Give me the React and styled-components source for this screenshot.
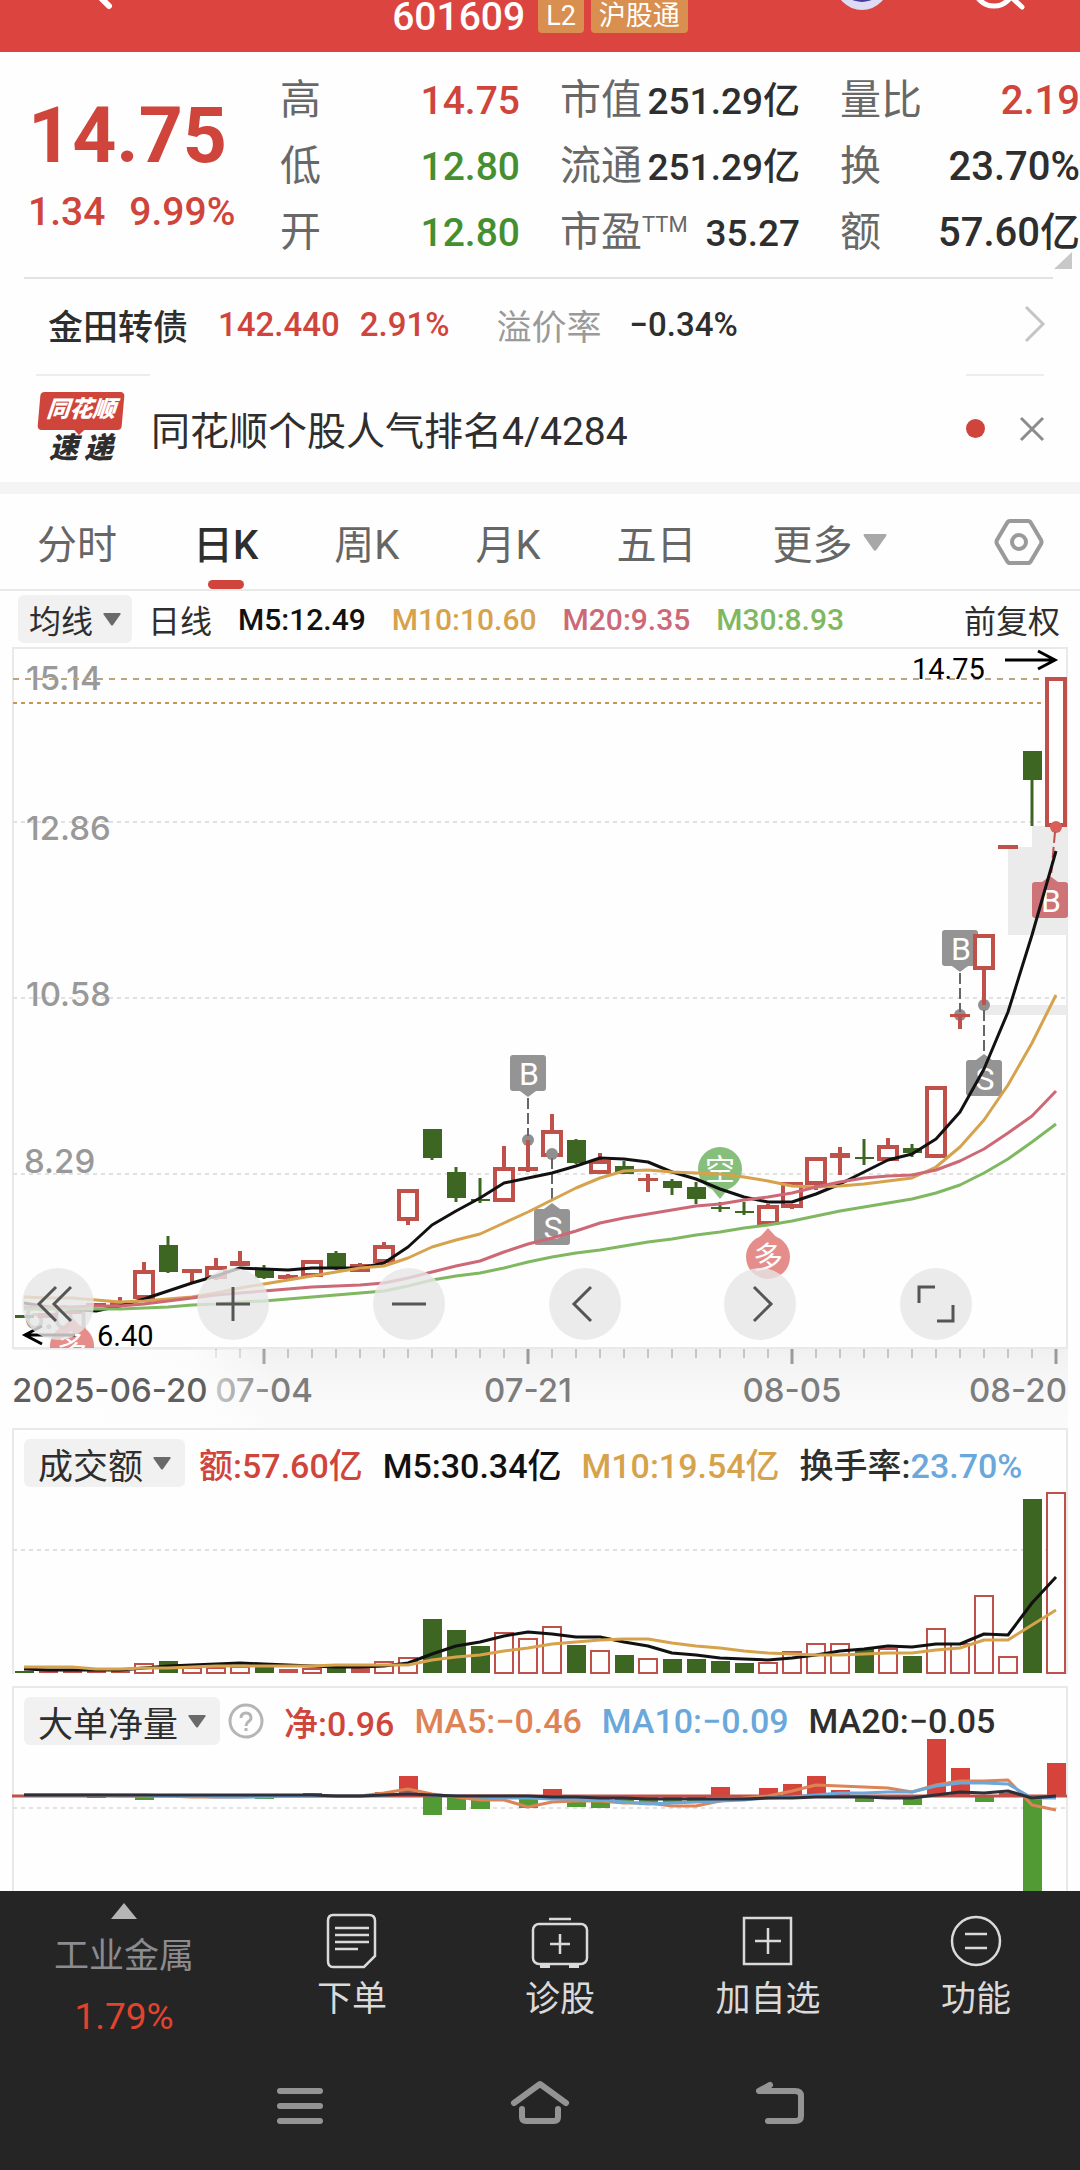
import React from 'react';
import styled, { createGlobalStyle, css } from 'styled-components';

const colors = {
    header: '#dc4440',
    badge: '#d88f50',
    red: '#cf453c',
    redLine: '#c0504a',
    green: '#468f30',
    candleGreen: '#3d6622',
    barGreen: '#529a33',
    barRed: '#d5433a',
    text: '#2e2e2e',
    black: '#111111',
    label: '#686868',
    muted: '#9a9a9a',
    line: '#e9e9e9',
    yellow: '#d6a24c',
    pink: '#cd6877',
    lime: '#80b862',
    blue: '#6aa8dc',
    orange: '#dd8355',
    dark: '#252525'
};

const textFont = `Roboto, 'Noto Sans CJK SC', sans-serif`;
const dateFont = `Inter, Roboto, sans-serif`;

const GlobalStyle = createGlobalStyle`
    * {
        box-sizing: border-box;
    }

    body {
        margin: 0;
        background: #fefefe;
        color: ${colors.text};
        font-family: ${textFont};
    }

    button {
        border: 0;
        padding: 0;
        background: none;
        color: inherit;
        font: inherit;
        cursor: pointer;
    }

    svg {
        display: block;
        flex: none;
    }
`;

const Page = styled.main`
    display: flex;
    flex-direction: column;
    min-height: 100vh;
    overflow: hidden;
`;

/* ---------- header ---------- */

const Header = styled.header`
    display: grid;
    grid-template-rows: 33px;
    grid-template-columns: 1fr auto 1fr;
    align-items: end;
    height: 52px;
    background: ${colors.header};
    color: #fff;
`;

const HeaderSide = styled.div`
    display: flex;
    justify-content: ${({ $end }) => ($end ? 'flex-end' : 'flex-start')};
    gap: 80px;
    padding: ${({ $end }) => ($end ? '0 48px 0 0' : '0 0 0 66px')};
`;

const StockCode = styled.h1`
    display: flex;
    gap: 7px;
    height: 40px;
    margin: 0;
    font-size: 39px;
    font-weight: 500;
    line-height: 48px;
`;

const Badge = styled.span`
    height: 40px;
    margin-left: ${({ $first }) => ($first ? 6 : 0)}px;
    padding: 0 8px;
    border-radius: 4px;
    background: ${colors.badge};
    font-size: 27px;
    font-weight: 400;
    line-height: 46px;
`;

/* ---------- quote ---------- */

const Quote = styled.section`
    position: relative;
    display: grid;
    grid-template-columns: repeat(4, 1fr);
    column-gap: 40px;
    padding: 15px 0 12px;
`;

const PriceBox = styled.div`
    padding: 31px 0 0 28px;
    color: ${colors.red};
`;

const Price = styled.div`
    font-size: 77px;
    font-weight: 700;
    line-height: 76px;
`;

const Change = styled.div`
    display: flex;
    gap: 24px;
    font-size: 39px;
    font-weight: 500;
    line-height: 76px;
`;

const QuoteList = styled.dl`
    margin: 0;
    font-size: ${({ $size }) => $size}px;
`;

const QuoteRow = styled.div`
    display: flex;
    align-items: baseline;
    justify-content: space-between;
    height: 66px;
    line-height: 66px;
    white-space: nowrap;

    dt {
        color: ${colors.label};
        font-size: 41px;
    }

    dd {
        margin: 0;
        color: ${({ $tone }) => colors[$tone] || colors.text};
        font-weight: 500;
    }

    sup {
        font-size: 22px;
        line-height: 22px;
        vertical-align: 14px;
    }
`;

const Corner = styled.svg`
    position: absolute;
    right: 8px;
    bottom: 8px;
`;

const Rule = styled.hr`
    width: calc(100% - 51px);
    height: 2px;
    margin: 0 27px 0 24px;
    border: 0;
    background: #e3e3e3;
`;

/* ---------- bond and news rows ---------- */

const BondRow = styled.a`
    display: flex;
    align-items: center;
    height: 95px;
    padding: 0 34px 5px 48px;
    color: inherit;
    font-weight: 500;
    text-decoration: none;
`;

const BondText = styled.span`
    margin-right: ${({ $gap }) => $gap}px;
    color: ${({ $tone }) => colors[$tone] || colors.text};
    font-size: ${({ $number }) => ($number ? 33 : 35)}px;
    font-weight: ${({ $tone }) => ($tone === 'muted' ? 400 : 500)};
`;

const Push = styled.span`
    flex: 1;
`;

const ShortRules = styled.div`
    display: flex;
    justify-content: space-between;
    padding: 0 36px;

    &::before,
    &::after {
        content: '';
        width: 114px;
        height: 2px;
        background: #ededed;
    }

    &::after {
        width: 78px;
    }
`;

const NewsRow = styled.section`
    display: flex;
    align-items: center;
    height: 106px;
    padding: 0 35px 1px 37px;
`;

const Logo = styled.div`
    display: flex;
    flex-direction: column;
    align-items: center;
    width: 88px;
    margin-right: 26px;
    font-weight: 900;
    font-style: italic;
`;

const LogoTop = styled.span`
    position: relative;
    width: 84px;
    height: 38px;
    border-radius: 4px;
    background: ${colors.red};
    color: #fff;
    font-size: 23px;
    line-height: 35px;
    text-align: center;
    transform: skewX(-5deg);

    &::after {
        content: '';
        position: absolute;
        left: 36px;
        top: 37px;
        border: 6px solid transparent;
        border-top-color: ${colors.red};
    }
`;

const LogoBottom = styled.span`
    display: flex;
    gap: 6px;
    color: ${colors.text};
    font-size: 29px;
    line-height: 36px;
`;

const NewsTitle = styled.a`
    padding-bottom: 2px;
    color: ${colors.text};
    font-size: 39px;
    text-decoration: none;
`;

const Dot = styled.span`
    width: 19px;
    height: 19px;
    margin: 0 34px 0 auto;
    border-radius: 50%;
    background: ${colors.red};
`;

const Band = styled.div`
    height: 12px;
    background: #f4f4f4;
`;

/* ---------- tabs ---------- */

const Tabs = styled.nav`
    display: flex;
    gap: 76px;
    height: 97px;
    padding: 0 36px 0 37px;
    border-bottom: 2px solid ${colors.line};

    > :last-child {
        margin-left: auto;
    }
`;

const Tab = styled.button`
    position: relative;
    display: flex;
    align-items: center;
    gap: 10px;
    color: ${({ $active }) => ($active ? colors.text : '#666')};
    font-size: 40px;
    font-weight: ${({ $active }) => ($active ? 500 : 400)};

    ${({ $active }) =>
        $active &&
        css`
            &::after {
                content: '';
                position: absolute;
                left: calc(50% - 18px);
                bottom: 0;
                width: 36px;
                height: 9px;
                border-radius: 5px;
                background: ${colors.red};
            }
        `}
`;

/* ---------- indicator rows ---------- */

const Legend = styled.div`
    display: flex;
    align-items: center;
    gap: 26px;
    height: 56px;
    padding: 0 20px 0 18px;
    font-size: 30px;
    font-weight: 500;
    white-space: nowrap;
`;

const LegendGroup = styled.div`
    display: flex;
    align-items: center;
    gap: ${({ $gap }) => $gap}px;
`;

const Picker = styled.button`
    display: flex;
    align-items: center;
    gap: 10px;
    height: 48px;
    padding: 0 ${({ $wide }) => ($wide ? 14 : 11)}px;
    border-radius: 6px;
    background: #f1f1f1;
    font-size: ${({ $wide }) => ($wide ? 35 : 32)}px;
    font-weight: 400;
`;

const Value = styled.span`
    color: ${({ $tone }) => colors[$tone] || colors.text};
    font-size: ${({ $size }) => $size || 30}px;
    font-weight: ${({ $light }) => ($light ? 400 : 500)};
    margin-left: ${({ $end }) => ($end ? 'auto' : 0)};
`;

/* ---------- charts ---------- */

const Figure = styled.figure`
    position: relative;
    margin: 0;
`;

const Chart = styled.svg`
    width: 100%;
    height: auto;
    overflow: hidden;
`;

const ChartTools = styled.div`
    position: absolute;
    left: 2%;
    right: 10%;
    bottom: 88px;
    display: flex;
    justify-content: space-between;
`;

const ToolButton = styled.button`
    display: flex;
    align-items: center;
    justify-content: center;
    width: 72px;
    height: 72px;
    border-radius: 50%;
    background: rgba(230, 230, 230, 0.8);
`;

const Panel = styled.section`
    display: grid;

    > * {
        grid-area: 1 / 1;
    }
`;

const PanelLegend = styled(Legend)`
    align-self: start;
    gap: 20px;
    height: 50px;
    margin-top: 10px;
    padding: 0 24px;
`;

/* ---------- bottom bars ---------- */

const BottomBar = styled.footer`
    flex: 1;
    background: ${colors.dark};
    color: #dadada;
`;

const Actions = styled.nav`
    display: grid;
    grid-template-columns: 31fr 26fr 26fr 26fr 26fr;
    height: 162px;
`;

const Action = styled.button`
    display: flex;
    flex-direction: column;
    align-items: center;
    gap: 4px;
    padding-top: 20px;
    font-size: 35px;
    line-height: 50px;
`;

const Sector = styled.a`
    display: flex;
    flex-direction: column;
    align-items: center;
    padding-top: 11px;
    color: #8b8b90;
    font-size: 35px;
    line-height: 60px;
    text-decoration: none;

    svg {
        margin-bottom: 7px;
    }

    strong {
        color: #e2432d;
        font-size: 37px;
        font-weight: 400;
    }
`;

const SystemNav = styled.nav`
    display: flex;
    justify-content: center;
    gap: 180px;
    padding-top: 23px;
`;

const SystemButton = styled.button`
    width: 60px;
    height: 60px;
`;

/* ---------- data ---------- */

const quote = [
    {
        size: 39,
        rows: [
            { label: '高', value: '14.75', tone: 'red' },
            { label: '低', value: '12.80', tone: 'green' },
            { label: '开', value: '12.80', tone: 'green' }
        ]
    },
    {
        size: 37,
        rows: [
            { label: '市值', value: '251.29亿' },
            { label: '流通', value: '251.29亿' },
            { label: '市盈', sup: 'TTM', value: '35.27' }
        ]
    },
    {
        size: 40,
        rows: [
            { label: '量比', value: '2.19', tone: 'red' },
            { label: '换', value: '23.70%' },
            { label: '额', value: '57.60亿' }
        ]
    }
];

const tabs = ['分时', '日K', '周K', '月K', '五日'];

// The three charts share one coordinate space: a day every 24 units,
// y running on from the price chart to the last panel.
const dayX = i => 24 + i * 24;

// [kind, high, body top, body bottom, low]; u = hollow, r = solid red, g = green
const candles = [
    ['g', 1315, 1315, 1318, 1318],
    ['r', 1313, 1313, 1318, 1318],
    ['r', 1310, 1311, 1314, 1314],
    ['r', 1303, 1303, 1307, 1307],
    ['r', 1297, 1302, 1305, 1305],
    ['u', 1262, 1272, 1297, 1297],
    ['g', 1236, 1245, 1272, 1273],
    ['r', 1269, 1269, 1273, 1282],
    ['u', 1258, 1268, 1277, 1280],
    ['r', 1251, 1261, 1266, 1266],
    ['g', 1265, 1268, 1278, 1279],
    ['r', 1274, 1275, 1279, 1279],
    ['u', 1261, 1262, 1275, 1275],
    ['g', 1251, 1253, 1267, 1270],
    ['r', 1263, 1264, 1272, 1272],
    ['u', 1242, 1247, 1261, 1261],
    ['u', 1191, 1191, 1219, 1225],
    ['g', 1129, 1129, 1158, 1160],
    ['g', 1167, 1172, 1198, 1202],
    ['g', 1178, 1199, 1201, 1203],
    ['u', 1146, 1169, 1200, 1200],
    ['r', 1140, 1167, 1171, 1172],
    ['u', 1114, 1132, 1155, 1155],
    ['g', 1139, 1140, 1163, 1164],
    ['u', 1153, 1162, 1172, 1174],
    ['g', 1161, 1166, 1174, 1174],
    ['r', 1174, 1178, 1181, 1192],
    ['g', 1179, 1181, 1188, 1195],
    ['g', 1182, 1187, 1199, 1204],
    ['g', 1202, 1207, 1209, 1212],
    ['g', 1202, 1211, 1213, 1215],
    ['u', 1204, 1207, 1223, 1224],
    ['u', 1184, 1184, 1206, 1209],
    ['u', 1159, 1159, 1183, 1190],
    ['r', 1147, 1153, 1158, 1175],
    ['g', 1139, 1157, 1159, 1165],
    ['u', 1138, 1147, 1159, 1159],
    ['g', 1144, 1148, 1153, 1157],
    ['u', 1087, 1088, 1156, 1156],
    ['r', 1014, 1014, 1017, 1029],
    ['u', 935, 936, 968, 1005],
    ['r', 845, 845, 849, 849],
    ['g', 751, 751, 780, 826],
    ['u', 678, 679, 825, 825]
];

const ma5 = [
    1303, 1307, 1309, 1311, 1306, 1299, 1291, 1283, 1276, 1268, 1269, 1270, 1268, 1268, 1268, 1263,
    1247, 1225, 1211, 1198, 1183, 1178, 1173, 1166, 1158, 1159, 1162, 1172, 1179, 1189, 1197, 1202,
    1202, 1194, 1184, 1172, 1160, 1154, 1139, 1112, 1069, 1012, 935, 851
];
const ma10 = [
    1297, 1298, 1298, 1300, 1302, 1301, 1299, 1297, 1293, 1288, 1284, 1280, 1276, 1272, 1268, 1266,
    1258, 1247, 1240, 1234, 1223, 1212, 1200, 1188, 1178, 1171, 1170, 1172, 1173, 1174, 1177, 1181,
    1186, 1187, 1186, 1184, 1181, 1178, 1167, 1147, 1120, 1085, 1043, 995
];
const ma20 = [
    1307, 1307, 1307, 1306, 1306, 1304, 1301, 1298, 1295, 1293, 1291, 1289, 1287, 1286, 1285, 1283,
    1278, 1272, 1266, 1261, 1252, 1244, 1238, 1231, 1223, 1218, 1214, 1210, 1206, 1204, 1200, 1197,
    1193, 1187, 1182, 1178, 1176, 1175, 1170, 1161, 1149, 1133, 1116, 1091
];
const ma30 = [
    1309, 1309, 1309, 1309, 1309, 1308, 1307, 1305, 1304, 1302, 1301, 1299, 1297, 1295, 1293, 1291,
    1286, 1280, 1276, 1273, 1268, 1262, 1257, 1253, 1250, 1246, 1242, 1239, 1235, 1232, 1228, 1225,
    1221, 1216, 1211, 1207, 1203, 1199, 1193, 1185, 1173, 1159, 1142, 1124
];

const VOLUME_BASE = 1673;
const volumes = [
    ['g', 1671], ['r', 1671], ['r', 1671], ['r', 1671], ['r', 1671], ['u', 1663], ['g', 1661],
    ['u', 1667], ['u', 1667], ['u', 1666], ['g', 1667], ['r', 1669], ['u', 1668], ['g', 1668],
    ['r', 1668], ['u', 1661], ['u', 1657], ['g', 1619], ['g', 1630], ['g', 1646], ['u', 1632],
    ['u', 1638], ['u', 1626], ['g', 1645], ['u', 1650], ['g', 1655], ['u', 1658], ['g', 1659],
    ['g', 1659], ['g', 1661], ['g', 1663], ['u', 1662], ['u', 1651], ['u', 1643], ['u', 1643],
    ['g', 1649], ['u', 1648], ['g', 1656], ['u', 1628], ['u', 1643], ['u', 1595], ['u', 1656],
    ['g', 1499], ['u', 1492]
];
const volumeMa5 = [
    1669, 1670, 1670, 1670, 1670, 1668, 1666, 1665, 1664, 1663, 1664, 1665, 1666, 1667, 1667, 1666,
    1663, 1654, 1646, 1642, 1636, 1632, 1634, 1637, 1637, 1642, 1646, 1653, 1655, 1658, 1659, 1660,
    1658, 1655, 1651, 1649, 1646, 1647, 1644, 1644, 1634, 1635, 1603, 1577
];
const volumeMa10 = [
    1667, 1667, 1667, 1669, 1669, 1668, 1668, 1667, 1666, 1666, 1666, 1666, 1666, 1665, 1665, 1665,
    1665, 1660, 1657, 1655, 1651, 1648, 1644, 1642, 1640, 1639, 1639, 1643, 1646, 1648, 1651, 1653,
    1654, 1655, 1655, 1654, 1653, 1653, 1650, 1648, 1640, 1640, 1625, 1610
];

const FLOW_BASE = 1796;
const flows = {
    3: 1798, 5: 1800, 10: 1799, 12: 1793, 15: 1792, 16: 1776, 17: 1815, 18: 1810, 19: 1809,
    21: 1808, 22: 1789, 23: 1807, 24: 1808, 25: 1803, 26: 1805, 27: 1802, 28: 1802, 29: 1787,
    31: 1788, 32: 1784, 33: 1776, 34: 1790, 35: 1802, 37: 1805, 38: 1739, 39: 1768, 40: 1802,
    41: 1793, 42: 1900, 43: 1763
};
const flowMa5 = [
    1795, 1795, 1795, 1795, 1796, 1796, 1796, 1797, 1797, 1797, 1796, 1796, 1796, 1796, 1796, 1793,
    1789, 1794, 1797, 1800, 1800, 1807, 1802, 1801, 1801, 1803, 1803, 1806, 1806, 1801, 1798, 1796,
    1791, 1785, 1786, 1787, 1788, 1792, 1785, 1781, 1781, 1780, 1805, 1810
];
const flowMa10 = [
    1795, 1795, 1795, 1795, 1795, 1795, 1796, 1796, 1797, 1797, 1797, 1796, 1796, 1796, 1796, 1795,
    1794, 1795, 1796, 1797, 1798, 1798, 1799, 1799, 1800, 1802, 1804, 1803, 1802, 1801, 1800, 1798,
    1797, 1795, 1793, 1793, 1792, 1792, 1786, 1783, 1783, 1784, 1798, 1798
];
const flowMa20 = [
    1795, 1795, 1795, 1795, 1795, 1795, 1795, 1795, 1795, 1795, 1795, 1795, 1795, 1796, 1796, 1795,
    1794, 1795, 1796, 1796, 1796, 1796, 1797, 1797, 1798, 1798, 1799, 1799, 1799, 1799, 1799, 1798,
    1798, 1797, 1797, 1797, 1798, 1798, 1795, 1792, 1793, 1791, 1798, 1796
];

/* ---------- chart parts ---------- */

const Line = ({ data, color, width = 3 }) => (
    <polyline
        points={data.map((y, i) => `${dayX(i)},${y}`).join(' ')}
        fill="none"
        stroke={color}
        strokeWidth={width}
        strokeLinejoin="round"
    />
);

const Candle = ({ i, data: [kind, high, top, bottom, low] }) => {
    const x = dayX(i);
    const color = kind === 'g' ? colors.candleGreen : colors.redLine;
    return (
        <g stroke={color} strokeWidth={kind === 'g' ? 3 : 4}>
            {high < top && <path d={`M${x} ${high}V${top}`} />}
            {low > bottom && <path d={`M${x} ${bottom}V${low}`} />}
            {kind === 'u' ? (
                <rect x={x - 9} y={top} width="18" height={bottom - top} fill="#fefefe" />
            ) : (
                <rect
                    x={kind === 'g' ? x - 9 : x - 10}
                    y={top}
                    width={kind === 'g' ? 19 : 20}
                    height={bottom - top}
                    fill={color}
                    stroke="none"
                />
            )}
        </g>
    );
};

const Tag = ({ x, y, letter, up, color = '#949494' }) => (
    <g>
        <rect x={x - 18} y={y} width="36" height="36" rx="3" fill={color} />
        <path
            d={up ? `M${x - 8} ${y}L${x} ${y - 6}L${x + 8} ${y}Z` : `M${x - 8} ${y + 36}L${x} ${y + 42}L${x + 8} ${y + 36}Z`}
            fill={color}
        />
        <text x={x + 1} y={y + 30} fontSize="32" fill="#fff" textAnchor="middle">
            {letter}
        </text>
    </g>
);

const Leader = ({ d, color = '#666' }) => (
    <path d={d} fill="none" stroke={color} strokeWidth="2" strokeDasharray="11 4" />
);

const Balloon = ({ x, y, letter, up, color }) => (
    <g opacity="0.85">
        <circle cx={x} cy={y} r="22" fill={color} />
        <path
            d={up ? `M${x - 9} ${y - 19}L${x} ${y - 29}L${x + 9} ${y - 19}Z` : `M${x - 9} ${y + 19}L${x} ${y + 30}L${x + 9} ${y + 19}Z`}
            fill={color}
        />
        <text x={x} y={y + 11} fontSize="30" fill="#fff" textAnchor="middle">
            {letter}
        </text>
    </g>
);

const Grid = ({ y, color = '#e2e2e2', dash = '4 4' }) => (
    <path d={`M13 ${y}H1066`} stroke={color} strokeWidth="2" strokeDasharray={dash} />
);

const PriceChart = () => (
    <Chart viewBox="0 647 1080 781" role="img" aria-label="日K">
        <defs>
            <linearGradient id="axisFade" x1="0" x2="1" y1="0" y2="0">
                <stop offset="0" stopColor="#fefefe" />
                <stop offset="0.17" stopColor="#fefefe" stopOpacity="0.8" />
                <stop offset="0.25" stopColor="#fefefe" stopOpacity="0" />
            </linearGradient>
            <linearGradient id="axisFill" x1="0" x2="0" y1="0" y2="1">
                <stop offset="0" stopColor="#f0f0f0" />
                <stop offset="0.5" stopColor="#f8f8f8" />
                <stop offset="1" stopColor="#fbfbfb" />
            </linearGradient>
            <clipPath id="plot">
                <rect x="12" y="648" width="1056" height="700" />
            </clipPath>
        </defs>

        <rect x="13" y="1348" width="1055" height="80" fill="url(#axisFill)" />
        <path d="M13 1348V648H1067V1348Z" fill="#fefefe" stroke={colors.line} strokeWidth="2" />

        <Grid y={822} />
        <Grid y={998} />
        <Grid y={1174} />
        <path d="M1032 826H1067V935H1008V847H1032ZM984 1005H1067V1015H984Z" fill="#ebebeb" />

        <g fontSize="33" fill="#999" fontFamily={dateFont} fontWeight="500">
            <text x="26" y="690">15.14</text>
            <text x="26" y="840">12.86</text>
            <text x="26" y="1006">10.58</text>
            <text x="24" y="1173">8.29</text>
            <text x="24" y="1329">6.01</text>
        </g>
        <Grid y={679} color="#bfa37c" dash="6 6" />
        <Grid y={703} color="#c69858" dash="4 4" />

        <g clipPath="url(#plot)">
            <Balloon x={72} y={1346} letter="多" up color="#e07a76" />
            <Tag x={960} y={930} letter="B" />
            <Tag x={528} y={1055} letter="B" />
            <g fill="#8f8f8f">
                <circle cx="528" cy="1140" r="6" />
                <circle cx="960" cy="1015" r="6" />
                <circle cx="984" cy="1005" r="6" />
            </g>
            {candles.map((c, i) => (
                <Candle key={i} i={i} data={c} />
            ))}
            <circle cx="552" cy="1154" r="6" fill="#8f8f8f" />
            <circle cx="1056" cy="827" r="6" fill="#d9605a" />
            <Leader d="M528 1098V1136" />
            <Leader d="M960 973V1012" />
            <Leader d="M552 1158V1203" />
            <Leader d="M984 1010V1054" />
            <Leader d="M1055 832L1051 876" color={colors.redLine} />
            <Tag x={552} y={1209} letter="S" up />
            <Tag x={984} y={1060} letter="S" up />
            <Tag x={1050} y={882} letter="B" up color="#ce7377" />
            <Balloon x={720} y={1169} letter="空" color="#72b565" />
            <Balloon x={768} y={1257} letter="多" up color="#e07a76" />

            <Line data={ma5} color={colors.black} />
            <Line data={ma10} color={colors.yellow} />
            <Line data={ma20} color={colors.pink} />
            <Line data={ma30} color={colors.lime} />
        </g>

        <g fill="none" stroke="#000" strokeWidth="3">
            <path d="M1005 660H1055M1038 651L1055 660L1038 669" />
            <path d="M75 1335H25M42 1326L25 1335L42 1344" />
        </g>
        <g fontSize="29" fill="#000">
            <text x="912" y="679">14.75</text>
            <text x="97" y="1346">6.40</text>
        </g>

        <g stroke="#9a9a9a">
            {Array.from({ length: 36 }, (_, n) => {
                const x = dayX(n + 8);
                const major = (n + 8) % 11 === 10;
                return <path key={x} d={`M${x} 1349V${major ? 1364 : 1358}`} strokeWidth={major ? 3 : 1} />;
            })}
        </g>
        <g fontSize="33" fill="#7d7d7d" fontFamily={dateFont} fontWeight="500">
            <text x="264" y="1402" textAnchor="middle">07-04</text>
            <text x="528" y="1402" textAnchor="middle">07-21</text>
            <text x="792" y="1402" textAnchor="middle">08-05</text>
            <text x="1067" y="1402" textAnchor="end">08-20</text>
        </g>
        <rect x="12" y="1350" width="1056" height="78" fill="url(#axisFade)" />
        <text x="12" y="1402" fontSize="33" fill="#5f5f5f" fontFamily={dateFont} fontWeight="500">
            2025-06-20
        </text>
    </Chart>
);

const VolumeChart = () => (
    <Chart viewBox="0 1428 1080 258" role="img" aria-label="成交额">
        <path d="M13 1674V1429H1067V1674" fill="none" stroke={colors.line} strokeWidth="2" />
        <Grid y={1550} />
        {volumes.map(([kind, top], i) =>
            kind === 'u' ? (
                <rect
                    key={i}
                    x={dayX(i) - 9}
                    y={top + 1}
                    width="18"
                    height={VOLUME_BASE - top - 1}
                    fill="#fefefe"
                    stroke={colors.redLine}
                    strokeWidth="2"
                />
            ) : (
                <rect
                    key={i}
                    x={dayX(i) - 9}
                    y={top}
                    width="19"
                    height={VOLUME_BASE - top}
                    fill={kind === 'g' ? colors.candleGreen : colors.redLine}
                />
            )
        )}
        <Line data={volumeMa5} color={colors.black} />
        <Line data={volumeMa10} color={colors.yellow} />
    </Chart>
);

const FlowChart = () => (
    <Chart viewBox="0 1686 1080 205" role="img" aria-label="大单净量">
        <path d="M13 1891V1687H1067V1891" fill="none" stroke={colors.line} strokeWidth="2" />
        <Grid y={1808} />
        {Object.entries(flows).map(([day, y]) => (
            <rect
                key={day}
                x={dayX(Number(day)) - 9}
                y={Math.min(y, FLOW_BASE)}
                width="19"
                height={Math.abs(y - FLOW_BASE)}
                fill={y > FLOW_BASE ? colors.barGreen : colors.barRed}
            />
        ))}
        <path d={`M12 ${FLOW_BASE}H1067`} stroke={colors.redLine} strokeWidth="3" />
        <Line data={flowMa5} color={colors.orange} />
        <Line data={flowMa10} color={colors.blue} />
        <Line data={flowMa20} color="#2f2f38" />
    </Chart>
);

/* ---------- icons ---------- */

const Stroke = ({ size, width = 3, color = 'currentColor', children, ...rest }) => (
    <svg
        width={size}
        height={size}
        viewBox={`0 0 ${size} ${size}`}
        fill="none"
        stroke={color}
        strokeWidth={width}
        aria-hidden="true"
        {...rest}
    >
        {children}
    </svg>
);

const Caret = ({ width = 18, height = 18, color = '#6a6a6a', up }) => (
    <svg width={width} height={height} viewBox="0 0 18 18" preserveAspectRatio="none" aria-hidden="true">
        <path d={up ? 'M0 17L9 1L18 17Z' : 'M1 3H17Q18 3 17.400 4.500L10 15Q9 16 8 15L0.600 4.500Q0 3 1 3Z'} fill={color} />
    </svg>
);

const tools = [
    { name: '最左', d: 'M34 19L17 36L34 53M49 19L32 36L49 53' },
    { name: '放大', d: 'M19 36H53M36 19V53' },
    { name: '缩小', d: 'M19 36H53' },
    { name: '左移', d: 'M42 19L25 36L42 53' },
    { name: '右移', d: 'M30 19L47 36L30 53' },
    { name: '全屏', d: 'M19 35V19H35M53 37V53H37' }
];

const actions = [
    {
        label: '下单',
        icon: (
            <>
                <path d="M9 4H45Q51 4 51 10V45L40 56H9Q4 56 4 50V10Q4 4 9 4Z" />
                <path d="M11 17H45M11 24H45M11 31H45M11 38H34" />
            </>
        )
    },
    {
        label: '诊股',
        icon: (
            <>
                <rect x="1" y="13" width="54" height="40" rx="6" />
                <path d="M17 8H39M18 33H38M28 23V43" />
                <path d="M8 55H18M37 55H47" strokeWidth="4" />
            </>
        )
    },
    {
        label: '加自选',
        icon: (
            <>
                <rect x="4" y="7" width="47" height="46" />
                <path d="M15 30H41M28 17V43" />
            </>
        )
    },
    {
        label: '功能',
        icon: (
            <>
                <circle cx="28" cy="30" r="24" />
                <path d="M17 23H39M17 37H39" />
            </>
        )
    }
];

const App = () => (
    <>
        <GlobalStyle />
        <Page>
            <Header>
                <HeaderSide>
                    <svg width="60" height="72" viewBox="0 0 60 72" fill="none" aria-hidden="true">
                        <path d="M44 -10L14 16L43 45" stroke="#fff" strokeWidth="6" strokeLinecap="round" />
                    </svg>
                </HeaderSide>
                <StockCode>
                    601609
                    <Badge $first>L2</Badge>
                    <Badge>沪股通</Badge>
                </StockCode>
                <HeaderSide $end>
                    <svg width="60" height="72" viewBox="0 0 60 72" aria-hidden="true">
                        <circle cx="30" cy="22" r="27" fill="#dedcf4" />
                        <ellipse cx="30" cy="26" rx="19" ry="15" fill="#4a3a9c" />
                    </svg>
                    <svg width="60" height="72" viewBox="0 0 60 72" fill="none" stroke="#fff" strokeWidth="5" aria-hidden="true">
                        <circle cx="22" cy="25" r="20" />
                        <path d="M36 33L50 46" strokeLinecap="round" />
                    </svg>
                </HeaderSide>
            </Header>

            <Quote>
                <PriceBox>
                    <Price>14.75</Price>
                    <Change>
                        <span>1.34</span>
                        <span>9.99%</span>
                    </Change>
                </PriceBox>
                {quote.map(({ size, rows }) => (
                    <QuoteList key={size} $size={size}>
                        {rows.map(({ label, sup, value, tone }) => (
                            <QuoteRow key={label} $tone={tone}>
                                <dt>
                                    {label}
                                    {sup && <sup>{sup}</sup>}
                                </dt>
                                <dd>{value}</dd>
                            </QuoteRow>
                        ))}
                    </QuoteList>
                ))}
                <Corner width="18" height="17" aria-hidden="true">
                    <path d="M18 0V17H0Z" fill="#c8c8c8" />
                </Corner>
            </Quote>
            <Rule />

            <BondRow href="#bond">
                <BondText $gap={30}>金田转债</BondText>
                <BondText $gap={20} $tone="red" $number>142.440</BondText>
                <BondText $gap={47} $tone="red" $number>2.91%</BondText>
                <BondText $gap={28} $tone="muted">溢价率</BondText>
                <BondText $gap={0} $number>−0.34%</BondText>
                <Push />
                <svg width="22" height="38" fill="none" aria-hidden="true">
                    <path d="M2 2L19 19L2 36" stroke="#c4c4c4" strokeWidth="3" />
                </svg>
            </BondRow>
            <ShortRules />

            <NewsRow>
                <Logo>
                    <LogoTop>同花顺</LogoTop>
                    <LogoBottom>
                        <span>速</span>
                        <span>递</span>
                    </LogoBottom>
                </Logo>
                <NewsTitle href="#rank">同花顺个股人气排名4/4284</NewsTitle>
                <Dot />
                <button type="button" aria-label="关闭">
                    <Stroke size={26} color="#8c8c8c">
                        <path d="M2 2L24 24M24 2L2 24" />
                    </Stroke>
                </button>
            </NewsRow>
            <Band />

            <Tabs>
                {tabs.map(tab => (
                    <Tab type="button" key={tab} $active={tab === '日K'}>
                        {tab}
                    </Tab>
                ))}
                <Tab type="button">
                    更多
                    <Caret width={24} height={24} color="#a8a8a8" />
                </Tab>
                <Tab type="button" aria-label="设置">
                    <Stroke size={50} width={4} color="#9a9a9a">
                        <path d="M16 4H34Q36 4 37 6L47 23Q48 25 47 27L37 44Q36 46 34 46H16Q14 46 13 44L3 27Q2 25 3 23L13 6Q14 4 16 4Z" />
                        <circle cx="25" cy="25" r="7" />
                    </Stroke>
                </Tab>
            </Tabs>

            <Legend>
                <LegendGroup $gap={16}>
                    <Picker type="button">
                        均线
                        <Caret />
                    </Picker>
                    <Value $size={32} $light>日线</Value>
                </LegendGroup>
                <Value $tone="black">M5:12.49</Value>
                <Value $tone="yellow">M10:10.60</Value>
                <Value $tone="pink">M20:9.35</Value>
                <Value $tone="lime">M30:8.93</Value>
                <Value $size={32} $light $end>前复权</Value>
            </Legend>

            <Figure>
                <PriceChart />
                <ChartTools>
                    {tools.map(({ name, d }) => (
                        <ToolButton type="button" key={name} aria-label={name}>
                            <Stroke size={72} color="#555">
                                <path d={d} />
                            </Stroke>
                        </ToolButton>
                    ))}
                </ChartTools>
            </Figure>

            <Panel>
                <VolumeChart />
                <PanelLegend>
                    <LegendGroup $gap={14}>
                        <Picker type="button" $wide>
                            成交额
                            <Caret />
                        </Picker>
                        <Value $size={34} $tone="red">额:57.60亿</Value>
                    </LegendGroup>
                    <Value $size={34} $tone="black">M5:30.34亿</Value>
                    <Value $size={34} $tone="yellow">M10:19.54亿</Value>
                    <Value $size={34}>
                        换手率:<Value $size={34} $tone="blue">23.70%</Value>
                    </Value>
                </PanelLegend>
            </Panel>

            <Panel>
                <FlowChart />
                <PanelLegend>
                    <LegendGroup $gap={8}>
                        <Picker type="button" $wide>
                            大单净量
                            <Caret />
                        </Picker>
                        <button type="button" aria-label="说明">
                            <Stroke size={36} color="#b5b5b5">
                                <circle cx="18" cy="18" r="16" />
                                <path d="M13 15Q13 10 18 10T23 15Q23 17 20 19Q18 21 18 23M18 25V28" />
                            </Stroke>
                        </button>
                    </LegendGroup>
                    <Value $size={34} $tone="red">净:0.96</Value>
                    <Value $size={34} $tone="orange">MA5:−0.46</Value>
                    <Value $size={34} $tone="blue">MA10:−0.09</Value>
                    <Value $size={34}>MA20:−0.05</Value>
                </PanelLegend>
            </Panel>

            <BottomBar>
                <Actions>
                    <Sector href="#sector">
                        <Caret width={26} color="#b5b5b5" up />
                        工业金属
                        <strong>1.79%</strong>
                    </Sector>
                    {actions.map(({ label, icon }) => (
                        <Action type="button" key={label}>
                            <Stroke size={60} width={2.5} viewBox="-2 0 60 60">
                                {icon}
                            </Stroke>
                            {label}
                        </Action>
                    ))}
                </Actions>
                <SystemNav>
                    <SystemButton type="button" aria-label="菜单">
                        <Stroke size={60} width={6} color="#949494" strokeLinecap="round">
                            <path d="M10 15H50M10 30H50M10 45H50" />
                        </Stroke>
                    </SystemButton>
                    <SystemButton type="button" aria-label="主页">
                        <Stroke size={60} width={6} color="#949494" strokeLinecap="round" strokeLinejoin="round">
                            <path d="M4 27L30 8L56 27M12 33V41Q12 45 16 45H44Q48 45 48 41V33" />
                        </Stroke>
                    </SystemButton>
                    <SystemButton type="button" aria-label="返回">
                        <Stroke size={60} width={6} color="#949494" strokeLinecap="round" strokeLinejoin="round">
                            <path d="M20 9L9 15H45Q51 15 51 20V40Q51 45 45 45H18" />
                        </Stroke>
                    </SystemButton>
                </SystemNav>
            </BottomBar>
        </Page>
    </>
);

export default App;
